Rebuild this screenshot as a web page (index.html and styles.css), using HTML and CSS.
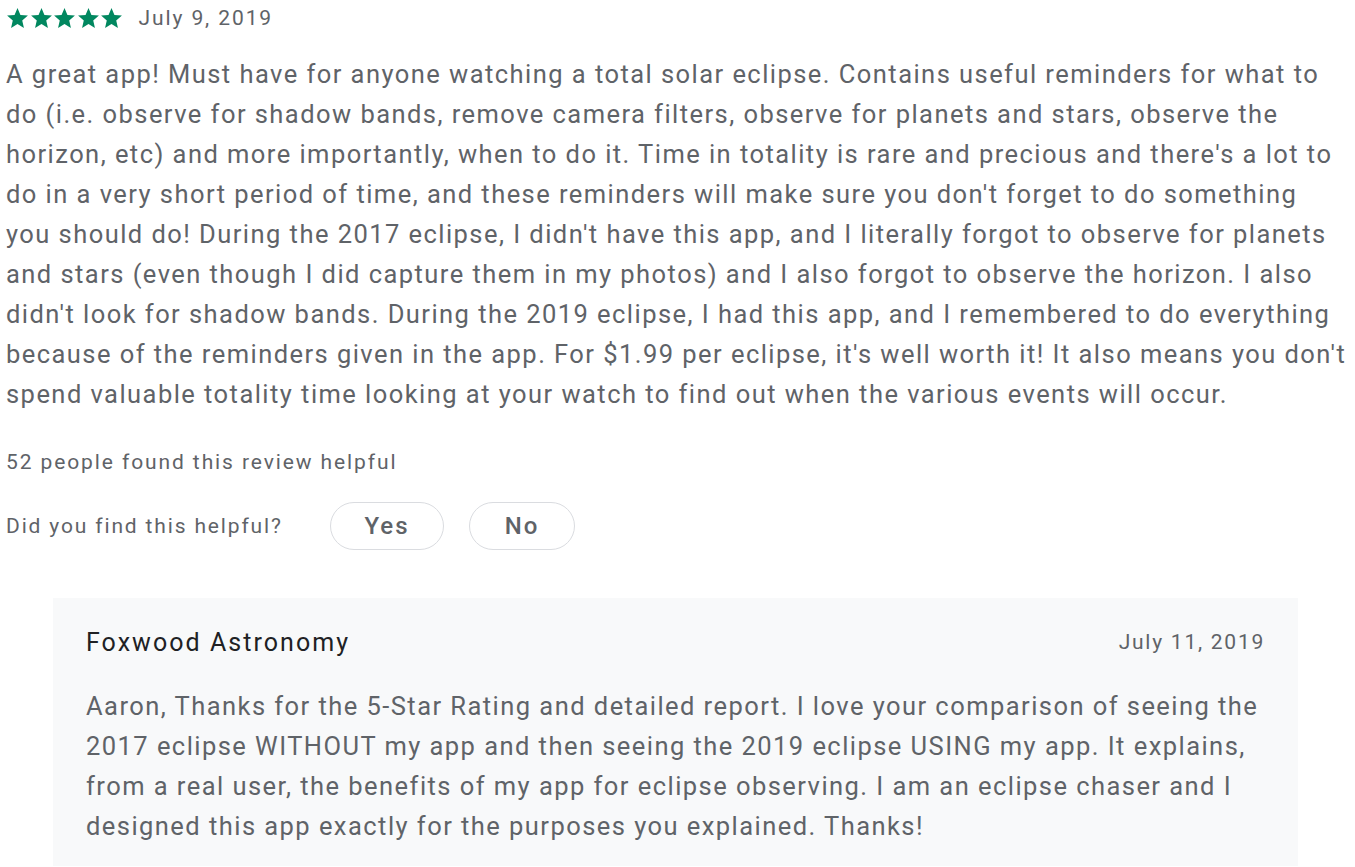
FILE: index.html
```html
<!DOCTYPE html>
<html>
<head>
<meta charset="utf-8">
<link rel="stylesheet" href="styles.css">
</head>
<body>
<div class="review">
  <div class="meta">
    <div class="stars">
      <svg viewBox="0 0 24 24" class="star"><path d="M12 17.27L18.18 21l-1.64-7.03L22 9.24l-7.19-.61L12 2 9.19 8.63 2 9.24l5.46 4.73L5.82 21z"/></svg>
      <svg viewBox="0 0 24 24" class="star"><path d="M12 17.27L18.18 21l-1.64-7.03L22 9.24l-7.19-.61L12 2 9.19 8.63 2 9.24l5.46 4.73L5.82 21z"/></svg>
      <svg viewBox="0 0 24 24" class="star"><path d="M12 17.27L18.18 21l-1.64-7.03L22 9.24l-7.19-.61L12 2 9.19 8.63 2 9.24l5.46 4.73L5.82 21z"/></svg>
      <svg viewBox="0 0 24 24" class="star"><path d="M12 17.27L18.18 21l-1.64-7.03L22 9.24l-7.19-.61L12 2 9.19 8.63 2 9.24l5.46 4.73L5.82 21z"/></svg>
      <svg viewBox="0 0 24 24" class="star"><path d="M12 17.27L18.18 21l-1.64-7.03L22 9.24l-7.19-.61L12 2 9.19 8.63 2 9.24l5.46 4.73L5.82 21z"/></svg>
    </div>
    <span class="date">July 9, 2019</span>
  </div>
  <p class="body">A great app! Must have for anyone watching a total solar eclipse. Contains useful reminders for what to do (i.e. observe for shadow bands, remove camera filters, observe for planets and stars, observe the horizon, etc) and more importantly, when to do it. Time in totality is rare and precious and there's a lot to do in a very short period of time, and these reminders will make sure you don't forget to do something you should do! During the 2017 eclipse, I didn't have this app, and I literally forgot to observe for planets and stars (even though I did capture them in my photos) and I also forgot to observe the horizon. I also didn't look for shadow bands. During the 2019 eclipse, I had this app, and I remembered to do everything because of the reminders given in the app. For $1.99 per eclipse, it's well worth it! It also means you don't spend valuable totality time looking at your watch to find out when the various events will occur.</p>
  <div class="helpful-count">52 people found this review helpful</div>
  <div class="helpful-row">
    <span class="question">Did you find this helpful?</span>
    <div class="buttons">
      <button class="pill yes">Yes</button>
      <button class="pill no">No</button>
    </div>
  </div>
  <div class="reply">
    <div class="reply-head">
      <span class="dev">Foxwood Astronomy</span>
      <span class="reply-date">July 11, 2019</span>
    </div>
    <p class="reply-body">Aaron, Thanks for the 5-Star Rating and detailed report. I love your comparison of seeing the 2017 eclipse WITHOUT my app and then seeing the 2019 eclipse USING my app. It explains, from a real user, the benefits of my app for eclipse observing. I am an eclipse chaser and I designed this app exactly for the purposes you explained. Thanks!</p>
  </div>
</div>
</body>
</html>
```
FILE: styles.css
```css
html, body {
  margin: 0;
  padding: 0;
  background: #fff;
}
body {
  font-family: Roboto, "Liberation Sans", sans-serif;
  color: #5f6368;
}
.review {
  padding: 0 0 0 6px;
  width: 1345px;
}
.meta {
  display: flex;
  align-items: center;
  height: 36px;
}
.stars {
  display: flex;
  margin-left: -1px;
}
.star {
  width: 25px;
  height: 25px;
  margin-right: -1.5px;
  fill: #01875f;
}
.date {
  font-size: 21px;
  margin-left: 16px;
  letter-spacing: 1.9px;
}
.body {
  margin: 18px 0 0 0;
  font-size: 25.5px;
  line-height: 40px;
  letter-spacing: 1.45px;
  width: 1343px;
}
.helpful-count {
  margin-top: 34px;
  font-size: 21px;
  line-height: 28px;
  letter-spacing: 1.9px;
}
.helpful-row {
  display: flex;
  align-items: center;
  margin-top: 26px;
}
.question {
  font-size: 21px;
  letter-spacing: 1.85px;
  width: 324px;
}
.buttons {
  display: flex;
  gap: 25px;
}
.pill {
  font-family: Roboto, "Liberation Sans", sans-serif;
  font-size: 24px;
  color: #5f6368;
  background: #fff;
  border: 1.5px solid #dadce0;
  border-radius: 24px;
  height: 48px;
  padding: 0;
  font-weight: 500;
  letter-spacing: 2px;
}
.yes { width: 114px; }
.no { width: 106px; }
.reply {
  margin: 48px 0 0 47px;
  width: 1245px;
  background: #f8f9fa;
  padding: 24px 33px 20px 33px;
  box-sizing: border-box;
}
.reply-head {
  display: flex;
  justify-content: space-between;
  align-items: center;
  height: 40px;
}
.dev {
  font-size: 25px;
  color: #202124;
  letter-spacing: 2.05px;
}
.reply-date {
  font-size: 21px;
  letter-spacing: 1.75px;
}
.reply-body {
  margin: 24px 0 0 0;
  font-size: 25.5px;
  line-height: 40px;
  letter-spacing: 1.45px;
}
```
